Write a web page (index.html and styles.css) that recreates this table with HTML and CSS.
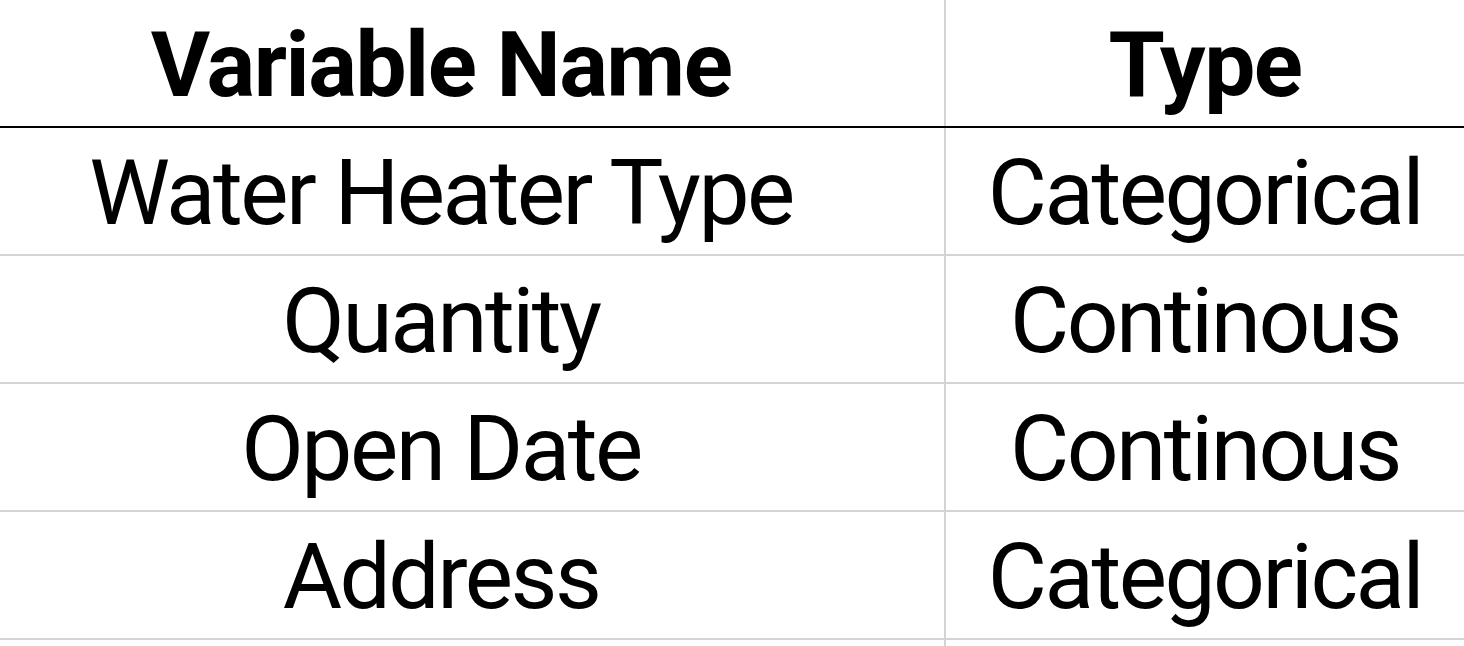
FILE: index.html
```html
<!DOCTYPE html>
<html>
<head>
<meta charset="utf-8">
<link rel="stylesheet" href="styles.css">
</head>
<body>
<div class="table">
  <div class="row head">
    <div class="cell name">Variable Name</div>
    <div class="cell type">Type</div>
  </div>
  <div class="row">
    <div class="cell name">Water Heater Type</div>
    <div class="cell type">Categorical</div>
  </div>
  <div class="row">
    <div class="cell name">Quantity</div>
    <div class="cell type">Continous</div>
  </div>
  <div class="row">
    <div class="cell name">Open Date</div>
    <div class="cell type">Continous</div>
  </div>
  <div class="row">
    <div class="cell name">Address</div>
    <div class="cell type">Categorical</div>
  </div>
  <div class="row stub">
    <div class="cell name"></div>
    <div class="cell type"></div>
  </div>
</div>
</body>
</html>
```
FILE: styles.css
```css
html, body {
  margin: 0;
  padding: 0;
  background: #ffffff;
}
.table {
  display: flex;
  flex-direction: column;
  width: 1464px;
  font-family: Roboto, "Liberation Sans", sans-serif;
  color: #000;
}
.row {
  display: grid;
  grid-template-columns: 946px 1fr;
  height: 128px;
  box-sizing: border-box;
  border-bottom: 2px solid #d4d4d4;
}
.row.head {
  border-bottom: 2px solid #000;
}
.row.stub {
  height: 6px;
  border-bottom: none;
}
.cell {
  display: flex;
  align-items: center;
  justify-content: center;
  box-sizing: border-box;
  padding-top: 4px;
  font-size: 91px;
  font-weight: 400;
  line-height: 1;
  letter-spacing: -2.5px;
  white-space: nowrap;
}
.head .cell {
  font-weight: 700;
  letter-spacing: -1.5px;
}
.stub .cell {
  padding-top: 0;
}
.name {
  padding-right: 62px;
  border-right: 2px solid #d4d4d4;
}
```
